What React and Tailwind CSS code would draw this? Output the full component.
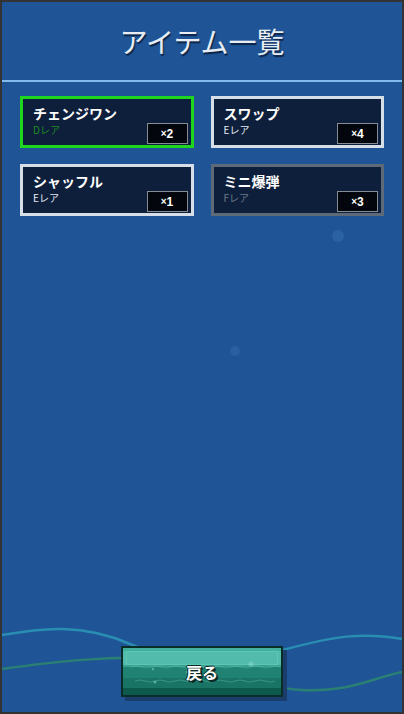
import React from "react";

const items = [
  { name: "チェンジワン", rarity: "D", count: 2, border: "border-[#1fd61f]", rarityText: "text-[#1c8c1c]" },
  { name: "スワップ", rarity: "E", count: 4, border: "border-[#d6dee8]", rarityText: "text-[#e6ecf3]" },
  { name: "シャッフル", rarity: "E", count: 1, border: "border-[#d6dee8]", rarityText: "text-[#e6ecf3]" },
  { name: "ミニ爆弾", rarity: "F", count: 3, border: "border-[#5e6a78]", rarityText: "text-[#6d7a8a]" },
];

function ItemCard({ item }) {
  return (
    <div
      className={`flex h-[52px] items-stretch justify-between border-[3px] bg-[#0e1f3c] ${item.border}`}
    >
      <div className="flex flex-col pl-[10px] pt-[6px]">
        <span className="text-[14px] font-bold leading-[16px] text-white">
          {item.name}
        </span>
        <span className={`mt-[3px] text-[10px] leading-[12px] ${item.rarityText}`}>
          {item.rarity}レア
        </span>
      </div>
      <div className="flex items-end pb-[1px] pr-[3px]">
        <div className="flex h-[21px] w-[41px] items-center justify-center border-[1.5px] border-[#868c94] bg-[#03070d] font-['Liberation_Sans',sans-serif] text-[12px] font-bold leading-none text-white">
          <span className="text-[10px]">×</span>
          {item.count}
        </div>
      </div>
    </div>
  );
}

function BackButton() {
  return (
    <button
      type="button"
      className="relative flex h-[51px] w-[162px] items-center justify-center border-2 border-[#0a2d28] bg-[linear-gradient(to_bottom,#41b09f_0px,#41b09f_3px,#52bbab_3px,#52bbab_17px,#3aa08e_17px,#3aa08e_19px,#1f8272_19px,#1f8272_30px,#197465_30px,#197465_40px,#0d594b_40px,#0d594b_100%)] shadow-[4px_4px_0_#1a3d6c]"
    >
      <div className="absolute left-[3px] right-[3px] top-[3px] h-[14px] border border-[#5fc6b6]" />
      <svg
        className="absolute inset-0 h-full w-full"
        viewBox="0 0 158 47"
        preserveAspectRatio="none"
      >
        <path
          d="M8 19 q5 -2 10 0 t10 0 t10 0 t10 0 t10 0 t10 0 t10 0 t10 0 t10 0 t10 0 t10 0 t10 0 t10 0 t10 0 t10 0"
          fill="none"
          stroke="#6fcfc0"
          strokeOpacity="0.45"
          strokeWidth="0.8"
        />
        <path
          d="M12 33 q5 -2 10 0 t10 0 t10 0 t10 0 t10 0 t10 0 t10 0 t10 0 t10 0 t10 0 t10 0 t10 0 t10 0 t10 0"
          fill="none"
          stroke="#6fcfc0"
          strokeOpacity="0.45"
          strokeWidth="0.8"
        />
        <circle cx="128" cy="16" r="2.5" fill="#8fdcd0" fillOpacity="0.5" />
        <circle cx="30" cy="21" r="1.3" fill="#8fdcd0" fillOpacity="0.5" />
        <circle cx="64" cy="24" r="1.3" fill="#8fdcd0" fillOpacity="0.5" />
        <circle cx="32" cy="34" r="1.5" fill="#8fdcd0" fillOpacity="0.5" />
      </svg>
      <span className="relative text-[16px] font-bold text-white [text-shadow:1px_1px_0_#0b2a26,-1px_0_0_#0b2a26,0_-1px_0_#0b2a26,2px_2px_0_#0b2a26]">
        戻る
      </span>
    </button>
  );
}

export default function App() {
  return (
    <div
      className="h-[714px] w-[404px] bg-[#333333] p-[2px]"
      style={{ fontFamily: '"Noto Sans CJK JP", "Noto Sans", sans-serif' }}
    >
      <div className="relative flex h-full w-full flex-col overflow-hidden bg-[#1f5597]">
        {/* waves */}
        <svg
          className="absolute bottom-0 left-0 h-[110px] w-full"
          viewBox="0 0 400 110"
          preserveAspectRatio="none"
        >
          <path
            d="M0 33 C40 26 80 21 128 42 S 230 62 281 48 S 360 30 400 37"
            fill="none"
            stroke="#2a8db2"
            strokeWidth="2.5"
          />
          <path
            d="M0 67 C50 60 100 54 160 56 S 250 86 300 88 S 370 76 400 70"
            fill="none"
            stroke="#2a8072"
            strokeWidth="2.5"
          />
        </svg>
        {/* bubbles */}
        <div className="absolute left-[330px] top-[228px] h-[12px] w-[12px] rounded-full bg-[#2b62a3]" />
        <div className="absolute left-[228px] top-[344px] h-[10px] w-[10px] rounded-full bg-[#2a60a1]" />

        <header className="flex h-[80px] items-center justify-center border-b-2 border-[#80bbec]">
          <h1 className="text-[28px] font-normal text-[#e8edf4] [text-shadow:1px_2px_1px_#0c2447]">
            アイテム一覧
          </h1>
        </header>

        <div className="relative grid grid-cols-2 gap-x-[17px] gap-y-[16px] px-[18px] pt-[14px]">
          {items.map((item) => (
            <ItemCard key={item.name} item={item} />
          ))}
        </div>

        <div className="relative mt-auto flex justify-center pb-[15px]">
          <BackButton />
        </div>
      </div>
    </div>
  );
}
